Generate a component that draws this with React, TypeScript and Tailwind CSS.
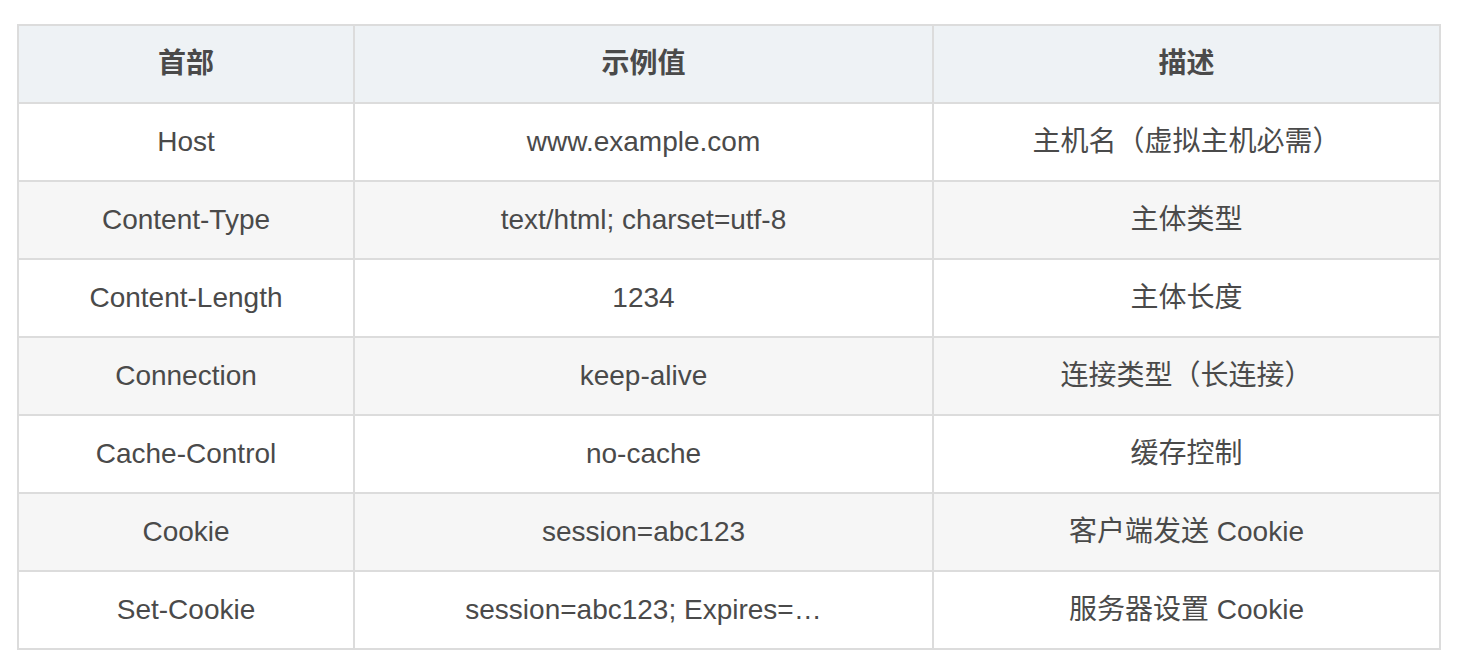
import React from "react";

const rows: [string, string, string][] = [
  ["Host", "www.example.com", "主机名（虚拟主机必需）"],
  ["Content-Type", "text/html; charset=utf-8", "主体类型"],
  ["Content-Length", "1234", "主体长度"],
  ["Connection", "keep-alive", "连接类型（长连接）"],
  ["Cache-Control", "no-cache", "缓存控制"],
  ["Cookie", "session=abc123", "客户端发送 Cookie"],
  ["Set-Cookie", "session=abc123; Expires=…", "服务器设置 Cookie"],
];

export default function App() {
  return (
    <div
      className="w-[1458px] h-[658px] bg-white pt-[24px] pl-[17px] text-[#4a4a4a]"
      style={{ fontFamily: '"Liberation Sans", Arial, "Noto Sans CJK SC", sans-serif' }}
    >
      <table className="table-fixed border-collapse w-[1422px] text-[28px]">
        <colgroup>
          <col className="w-[336px]" />
          <col className="w-[579px]" />
          <col className="w-[507px]" />
        </colgroup>
        <thead>
          <tr className="h-[78px] bg-[#eef2f5]">
            {["首部", "示例值", "描述"].map((h) => (
              <th key={h} className="border-2 border-[#dcdcdc] text-center font-bold p-0">
                {h}
              </th>
            ))}
          </tr>
        </thead>
        <tbody>
          {rows.map((r, i) => (
            <tr key={r[0]} className={`h-[78px] ${i % 2 === 1 ? "bg-[#f6f6f6]" : "bg-white"}`}>
              {r.map((c, j) => (
                <td key={j} className="border-2 border-[#dcdcdc] text-center p-0">
                  {c}
                </td>
              ))}
            </tr>
          ))}
        </tbody>
      </table>
    </div>
  );
}
